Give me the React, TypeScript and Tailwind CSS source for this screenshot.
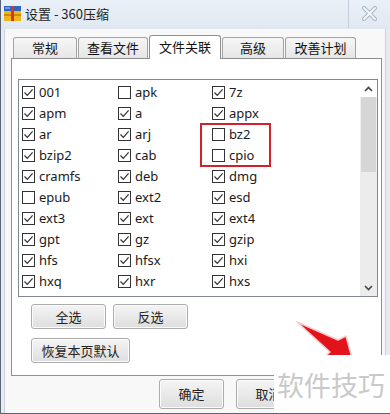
const cjk = { fontFamily: '"Noto Sans CJK SC", "Noto Sans", sans-serif' };
const latin = { fontFamily: '"Noto Sans", "Noto Sans CJK SC", sans-serif' };

type Item = { name: string; on: boolean };

const rows: Item[][] = [
  [{ name: "001", on: true }, { name: "apk", on: false }, { name: "7z", on: true }],
  [{ name: "apm", on: true }, { name: "a", on: true }, { name: "appx", on: true }],
  [{ name: "ar", on: true }, { name: "arj", on: true }, { name: "bz2", on: false }],
  [{ name: "bzip2", on: true }, { name: "cab", on: true }, { name: "cpio", on: false }],
  [{ name: "cramfs", on: true }, { name: "deb", on: true }, { name: "dmg", on: true }],
  [{ name: "epub", on: false }, { name: "ext2", on: true }, { name: "esd", on: true }],
  [{ name: "ext3", on: true }, { name: "ext", on: true }, { name: "ext4", on: true }],
  [{ name: "gpt", on: true }, { name: "gz", on: true }, { name: "gzip", on: true }],
  [{ name: "hfs", on: true }, { name: "hfsx", on: true }, { name: "hxi", on: true }],
  [{ name: "hxq", on: true }, { name: "hxr", on: true }, { name: "hxs", on: true }],
];

function Check({ item }: { item: Item }) {
  return (
    <div className="flex items-center h-[21px]">
      <div className="w-[13px] h-[13px] border border-[#333] bg-white flex items-center justify-center shrink-0">
        {item.on && (
          <svg width="11" height="11" viewBox="0 0 11 11">
            <path d="M1.5 5.5 L4.3 8.3 L9.6 2.4" fill="none" stroke="#333" strokeWidth="1.2" />
          </svg>
        )}
      </div>
      <span className="ml-[4px] text-[13px] text-[#1a1a1a] leading-none" style={latin}>
        {item.name}
      </span>
    </div>
  );
}

function Btn({ label, w, h }: { label: string; w: string; h: string }) {
  return (
    <div
      className={`${w} ${h} border border-[#acacac] rounded-[3px] bg-gradient-to-b from-[#f4f4f4] to-[#dedede] flex items-center justify-center text-[13px] text-[#222] shadow-[inset_0_0_0_1px_#fbfbfb]`}
      style={cjk}
    >
      {label}
    </div>
  );
}

const tabs = [
  { label: "常规", w: "w-[64px]" },
  { label: "查看文件", w: "w-[70px]" },
  { label: "文件关联", w: "w-[72px]", sel: true },
  { label: "高级", w: "w-[62px]" },
  { label: "改善计划", w: "w-[71px]" },
];

export default function App() {
  return (
    <div className="relative w-[390px] h-[414px] overflow-hidden bg-[#e4ebf4] border-l border-b border-[#5b6470] flex flex-col">
      {/* title bar */}
      <div className="h-[29px] flex items-start shrink-0 bg-gradient-to-b from-[#eaf0f7] to-[#e1e8f1]">
        <svg width="17" height="15" viewBox="0 0 17 15" className="ml-[3px] mt-[6px]">
          <rect x="0" y="0" width="17" height="5" fill="#2f64c2" />
          <rect x="0" y="5" width="17" height="10" fill="#f2b51c" />
          <rect x="0" y="8" width="17" height="2" fill="#c98a10" />
          <rect x="7" y="0" width="3" height="15" fill="#d9342b" />
          <rect x="1" y="1" width="5" height="2" fill="#6f9be6" />
        </svg>
        <span className="ml-[4px] mt-[5px] text-[13px] text-[#1e1e1e] leading-[18px]" style={cjk}>
          设置 - 360压缩
        </span>
        <div className="ml-auto w-px h-[28px] bg-[#c3ceda]" />
        <div className="w-[41px] flex justify-center pt-[6px]">
          <svg width="15" height="15" viewBox="0 0 15 15">
            <path d="M2 2 L13 13 M13 2 L2 13" stroke="#a9b6c6" strokeWidth="4" strokeLinecap="round" />
            <path d="M2 2 L13 13 M13 2 L2 13" stroke="#f4f7fa" strokeWidth="2" strokeLinecap="round" />
          </svg>
        </div>
      </div>

      {/* client */}
      <div className="flex-1 ml-[3px] mr-[4px] bg-[#f8f8f8] border-l border-r border-[#c9d2dc] pt-[6px] pl-[6px]">
        <div className="flex items-end h-[23px] pl-[2px] gap-[1px]">
          {tabs.map((t) =>
            t.sel ? (
              <div
                key={t.label}
                className={`${t.w} h-[24px] mb-[-1px] relative z-10 bg-white border border-b-0 border-[#8e8f8f] rounded-t-[3px] flex items-center justify-center text-[13px] text-[#111] pb-[2px]`}
                style={cjk}
              >
                {t.label}
              </div>
            ) : (
              <div
                key={t.label}
                className={`${t.w} h-[21px] bg-gradient-to-b from-[#f6f6f6] to-[#e6e6e6] border border-b-0 border-[#a3a3a3] rounded-t-[3px] flex items-center justify-center text-[13px] text-[#111]`}
                style={cjk}
              >
                {t.label}
              </div>
            )
          )}
        </div>

        {/* panel */}
        <div className="w-[371px] h-[318px] bg-white border border-[#8e8f8f] pl-[6px] pt-[20px]">
          <div className="w-[360px] h-[218px] border border-[#828790] flex bg-white">
            <div className="flex-1 pl-[3px] pt-[2px]">
              {rows.map((r, i) => (
                <div key={i} className="grid grid-cols-[96px_94px_1fr]">
                  {r.map((it) => (
                    <div key={it.name} className="relative">
                      <Check item={it} />
                      {it.name === "bz2" && (
                        <div className="absolute left-[-12px] top-[-1px] w-[71px] h-[44px] border-2 border-[#d4202a] z-10" />
                      )}
                    </div>
                  ))}
                </div>
              ))}
            </div>
            {/* scrollbar */}
            <div className="w-[17px] flex flex-col bg-[#f0f0f0]">
              <div className="h-[17px] flex items-center justify-center bg-white">
                <svg width="9" height="6" viewBox="0 0 9 6">
                  <path d="M1 5 L4.5 1.5 L8 5" fill="none" stroke="#444" strokeWidth="1.6" />
                </svg>
              </div>
              <div className="h-[75px] mx-[1px] bg-[#d6d6d6]" />
              <div className="flex-1 bg-[#ececec]" />
              <div className="h-[17px] flex items-center justify-center bg-[#ececec]">
                <svg width="9" height="6" viewBox="0 0 9 6">
                  <path d="M1 1 L4.5 4.5 L8 1" fill="none" stroke="#444" strokeWidth="1.6" />
                </svg>
              </div>
            </div>
          </div>

          <div className="ml-[13px] mt-[7px] flex gap-[7px]">
            <Btn label="全选" w="w-[75px]" h="h-[25px]" />
            <Btn label="反选" w="w-[75px]" h="h-[25px]" />
          </div>
          <div className="ml-[13px] mt-[9px]">
            <Btn label="恢复本页默认" w="w-[99px]" h="h-[25px]" />
          </div>
        </div>

        <div className="flex mt-[3px] pl-[148px] gap-[12px]">
          <Btn label="确定" w="w-[65px]" h="h-[30px]" />
          <Btn label="取消" w="w-[65px]" h="h-[30px]" />
        </div>
      </div>

      {/* annotation arrow */}
      <svg className="absolute left-0 top-0 pointer-events-none" width="390" height="414" viewBox="0 0 390 414">
        <path d="M296 322 L337 340 L345 336 L352 362 L318 362 L329 352 Z" fill="#e4121b" stroke="#f6c9c9" strokeWidth="1.5" strokeLinejoin="round" />
      </svg>

      {/* watermark */}
      <div className="absolute left-[273px] top-[355px] w-[117px] h-[59px] bg-white flex items-start pl-[3px] pt-[14px]">
        <span className="text-[27px] leading-[32px] text-[#c9c9c9] whitespace-nowrap" style={cjk}>
          软件技巧
        </span>
      </div>
    </div>
  );
}
